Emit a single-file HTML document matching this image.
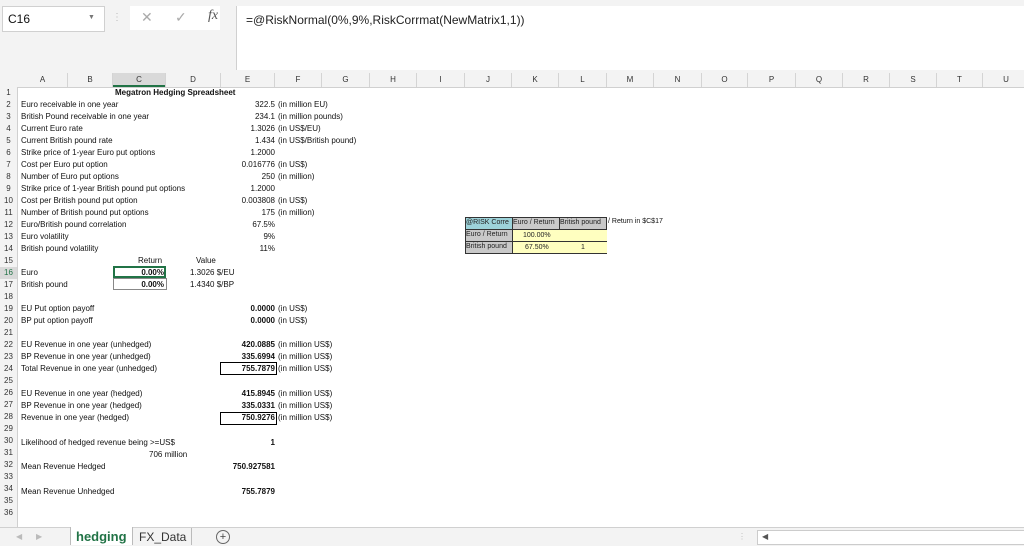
<!DOCTYPE html><html><head><style>
body{margin:0;width:1024px;height:545px;overflow:hidden;background:#fff;font-family:"Liberation Sans",Arial,sans-serif;position:relative}
.a{position:absolute;white-space:nowrap;font-size:8px;line-height:12px;color:#111}
.r{text-align:right}
.b{font-weight:bold}
.rn{position:absolute;left:0;width:17px;text-align:center;font-size:8px;line-height:12px;color:#333}
.ch{position:absolute;top:73px;height:14px;font-size:8px;line-height:14px;text-align:center;color:#333;border-right:1px solid #d4d4d4}
.t{position:absolute;border:1px solid #333;box-sizing:border-box;line-height:10px;overflow:hidden;white-space:nowrap}
</style></head><body>
<div style="position:absolute;left:0;top:0;width:1024px;height:72px;background:#f3f3f3"></div>
<div style="position:absolute;left:2px;top:6px;width:101px;height:24px;background:#fff;border:1px solid #d0d0d0"></div>
<div class="a" style="left:8px;top:12px;font-size:12px;line-height:14px">C16</div>
<div class="a" style="left:88px;top:12px;font-size:7px;color:#777">▼</div>
<div class="a" style="left:112px;top:12px;font-size:10px;color:#bbb">⋮</div>
<div style="position:absolute;left:130px;top:6px;width:90px;height:24px;background:#fff"></div>
<div class="a" style="left:141px;top:11px;font-size:14px;color:#aaa">✕</div>
<div class="a" style="left:175px;top:11px;font-size:14px;color:#aaa">✓</div>
<div class="a" style="left:208px;top:10px;font-size:14px;font-style:italic;font-family:'Liberation Serif',serif;color:#555">fx</div>
<div style="position:absolute;left:236px;top:6px;width:788px;height:64px;background:#fff;border-left:1px solid #d0d0d0"></div>
<div class="a" style="left:246px;top:13px;font-size:12px;line-height:14px;color:#222">=@RiskNormal(0%,9%,RiskCorrmat(NewMatrix1,1))</div>
<div style="position:absolute;left:0;top:72px;width:1024px;height:15px;background:#f3f3f3;border-bottom:1px solid #d0d0d0"></div>
<div style="position:absolute;left:0;top:87px;width:17px;height:440px;background:#f3f3f3;border-right:1px solid #d0d0d0"></div>
<div style="position:absolute;left:113px;top:73px;width:53px;height:14px;background:#d9d9d9;border-bottom:2px solid #217346;box-sizing:border-box"></div>
<div id="cols"></div>
<div id="rows"></div>
<script>
var b=[18,68,113,166,221,275,322,370,417,465,512,559,607,654,702,748,796,843,890,937,983,1030];
var L="ABCDEFGHIJKLMNOPQRSTU",h='';
for(var i=0;i<21;i++){h+='<div class="ch" style="left:'+b[i]+'px;width:'+(b[i+1]-b[i]-1)+'px">'+L[i]+'</div>';}
document.getElementById('cols').outerHTML=h;
h='';for(var i=1;i<=36;i++){h+='<div class="rn" style="top:'+(87+(i-1)*12)+'px'+(i==16?';background:#d9d9d9;color:#217346':'')+'">'+i+'</div>';}
document.getElementById('rows').outerHTML=h;
</script>

<div class="a b" style="left:115px;top:87px">Megatron Hedging Spreadsheet</div>
<div class="a" style="left:21px;top:99px">Euro receivable in one year</div>
<div class="a" style="left:21px;top:111px">British Pound receivable in one year</div>
<div class="a" style="left:21px;top:123px">Current Euro rate</div>
<div class="a" style="left:21px;top:135px">Current British pound rate</div>
<div class="a" style="left:21px;top:147px">Strike price of 1-year Euro put options</div>
<div class="a" style="left:21px;top:159px">Cost per Euro put option</div>
<div class="a" style="left:21px;top:171px">Number of Euro put options</div>
<div class="a" style="left:21px;top:183px">Strike price of 1-year British pound put options</div>
<div class="a" style="left:21px;top:195px">Cost per British pound put option</div>
<div class="a" style="left:21px;top:207px">Number of British pound put options</div>
<div class="a" style="left:21px;top:219px">Euro/British pound correlation</div>
<div class="a" style="left:21px;top:231px">Euro volatility</div>
<div class="a" style="left:21px;top:243px">British pound volatility</div>

<div class="a r" style="right:749px;top:99px">322.5</div><div class="a" style="left:278px;top:99px">(in million EU)</div>
<div class="a r" style="right:749px;top:111px">234.1</div><div class="a" style="left:278px;top:111px">(in million pounds)</div>
<div class="a r" style="right:749px;top:123px">1.3026</div><div class="a" style="left:278px;top:123px">(in US$/EU)</div>
<div class="a r" style="right:749px;top:135px">1.434</div><div class="a" style="left:278px;top:135px">(in US$/British pound)</div>
<div class="a r" style="right:749px;top:147px">1.2000</div>
<div class="a r" style="right:749px;top:159px">0.016776</div><div class="a" style="left:278px;top:159px">(in US$)</div>
<div class="a r" style="right:749px;top:171px">250</div><div class="a" style="left:278px;top:171px">(in million)</div>
<div class="a r" style="right:749px;top:183px">1.2000</div>
<div class="a r" style="right:749px;top:195px">0.003808</div><div class="a" style="left:278px;top:195px">(in US$)</div>
<div class="a r" style="right:749px;top:207px">175</div><div class="a" style="left:278px;top:207px">(in million)</div>
<div class="a r" style="right:749px;top:219px">67.5%</div>
<div class="a r" style="right:749px;top:231px">9%</div>
<div class="a r" style="right:749px;top:243px">11%</div>

<div class="a" style="left:138px;top:255px">Return</div>
<div class="a" style="left:196px;top:255px">Value</div>
<div class="a" style="left:21px;top:267px">Euro</div>
<div class="a" style="left:21px;top:279px">British pound</div>
<div style="position:absolute;left:113px;top:266px;width:53px;height:12px;border:2px solid #217346;box-sizing:border-box"></div>
<div style="position:absolute;left:113px;top:278px;width:54px;height:12px;border:1px solid #888;box-sizing:border-box"></div>
<div class="a b r" style="right:860px;top:267px">0.00%</div>
<div class="a b r" style="right:860px;top:279px">0.00%</div>
<div class="a" style="left:190px;top:267px">1.3026 $/EU</div>
<div class="a" style="left:190px;top:279px">1.4340 $/BP</div>

<div class="a" style="left:21px;top:303px">EU Put option payoff</div>
<div class="a" style="left:21px;top:315px">BP put option payoff</div>
<div class="a b r" style="right:749px;top:303px">0.0000</div><div class="a" style="left:278px;top:303px">(in US$)</div>
<div class="a b r" style="right:749px;top:315px">0.0000</div><div class="a" style="left:278px;top:315px">(in US$)</div>
<div class="a" style="left:21px;top:339px">EU Revenue in one year (unhedged)</div>
<div class="a" style="left:21px;top:351px">BP Revenue in one year (unhedged)</div>
<div class="a" style="left:21px;top:363px">Total Revenue in one year (unhedged)</div>
<div class="a b r" style="right:749px;top:339px">420.0885</div><div class="a" style="left:278px;top:339px">(in million US$)</div>
<div class="a b r" style="right:749px;top:351px">335.6994</div><div class="a" style="left:278px;top:351px">(in million US$)</div>
<div style="position:absolute;left:220px;top:362px;width:57px;height:13px;border:1px solid #000;box-sizing:border-box"></div>
<div class="a b r" style="right:749px;top:363px">755.7879</div><div class="a" style="left:278px;top:363px">(in million US$)</div>
<div class="a" style="left:21px;top:388px">EU Revenue in one year (hedged)</div>
<div class="a" style="left:21px;top:400px">BP Revenue in one year (hedged)</div>
<div class="a" style="left:21px;top:412px">Revenue in one year (hedged)</div>
<div class="a b r" style="right:749px;top:388px">415.8945</div><div class="a" style="left:278px;top:388px">(in million US$)</div>
<div class="a b r" style="right:749px;top:400px">335.0331</div><div class="a" style="left:278px;top:400px">(in million US$)</div>
<div style="position:absolute;left:220px;top:412px;width:57px;height:13px;border:1px solid #000;box-sizing:border-box"></div>
<div class="a b r" style="right:749px;top:412px">750.9276</div><div class="a" style="left:278px;top:412px">(in million US$)</div>
<div class="a" style="left:21px;top:437px">Likelihood of hedged revenue being &gt;=US$</div>
<div class="a b r" style="right:749px;top:437px">1</div>
<div class="a" style="left:149px;top:449px">706 million</div>
<div class="a" style="left:21px;top:461px">Mean Revenue Hedged</div>
<div class="a b r" style="right:749px;top:461px">750.927581</div>
<div class="a" style="left:21px;top:486px">Mean Revenue Unhedged</div>
<div class="a b r" style="right:749px;top:486px">755.7879</div>

<div style="position:absolute;left:465px;top:217px;width:142px;height:37px;font-size:7px;color:#222">
<div style="position:absolute;left:47px;top:12px;width:95px;height:24px;background:#ffffc0;border-bottom:1px solid #333"></div>
<div style="position:absolute;left:47px;top:24px;width:95px;border-top:1px solid #333"></div>
<div class="t" style="left:0;top:0;width:48px;height:13px;background:#9dd3da">@RISK Corre</div>
<div class="t" style="left:47px;top:0;width:48px;height:13px;background:#c9c9c9">Euro / Return</div>
<div class="t" style="left:94px;top:0;width:48px;height:13px;background:#c9c9c9">British pound</div>
<div class="t" style="left:0;top:12px;width:48px;height:13px;background:#c9c9c9">Euro / Return</div>
<div class="t" style="left:0;top:24px;width:48px;height:13px;background:#c9c9c9">British pound</div>
<div style="position:absolute;left:58px;top:13px;line-height:11px">100.00%</div>
<div style="position:absolute;left:60px;top:25px;line-height:11px">67.50%</div>
<div style="position:absolute;left:116px;top:25px;line-height:11px">1</div>
</div>
<div class="a" style="left:608px;top:216px;font-size:7px">/ Return in $C$17</div>

<div style="position:absolute;left:0;top:527px;width:1024px;height:18px;background:#f3f3f3;border-top:1px solid #d0d0d0"></div>
<div class="a" style="left:16px;top:531px;color:#bbb">◀</div>
<div class="a" style="left:36px;top:531px;color:#bbb">▶</div>
<div style="position:absolute;left:70px;top:527px;width:61px;height:18px;background:#fff;border-left:1px solid #bbb;border-right:1px solid #bbb"></div>
<div class="a b" style="left:76px;top:529px;font-size:13px;line-height:16px;color:#217346">hedging</div>
<div class="a" style="left:139px;top:529px;font-size:12px;line-height:16px;color:#333">FX_Data</div>
<div style="position:absolute;left:191px;top:528px;height:17px;border-left:1px solid #bbb"></div>
<div style="position:absolute;left:216px;top:530px;width:12px;height:12px;border:1px solid #666;border-radius:50%;font-size:11px;line-height:12px;text-align:center;color:#444">+</div>
<div class="a" style="left:738px;top:531px;color:#bbb">⋮</div>
<div style="position:absolute;left:757px;top:530px;width:267px;height:13px;background:#fff;border:1px solid #ccc"></div>
<div class="a" style="left:762px;top:531px;color:#555">◀</div>
</body></html>
